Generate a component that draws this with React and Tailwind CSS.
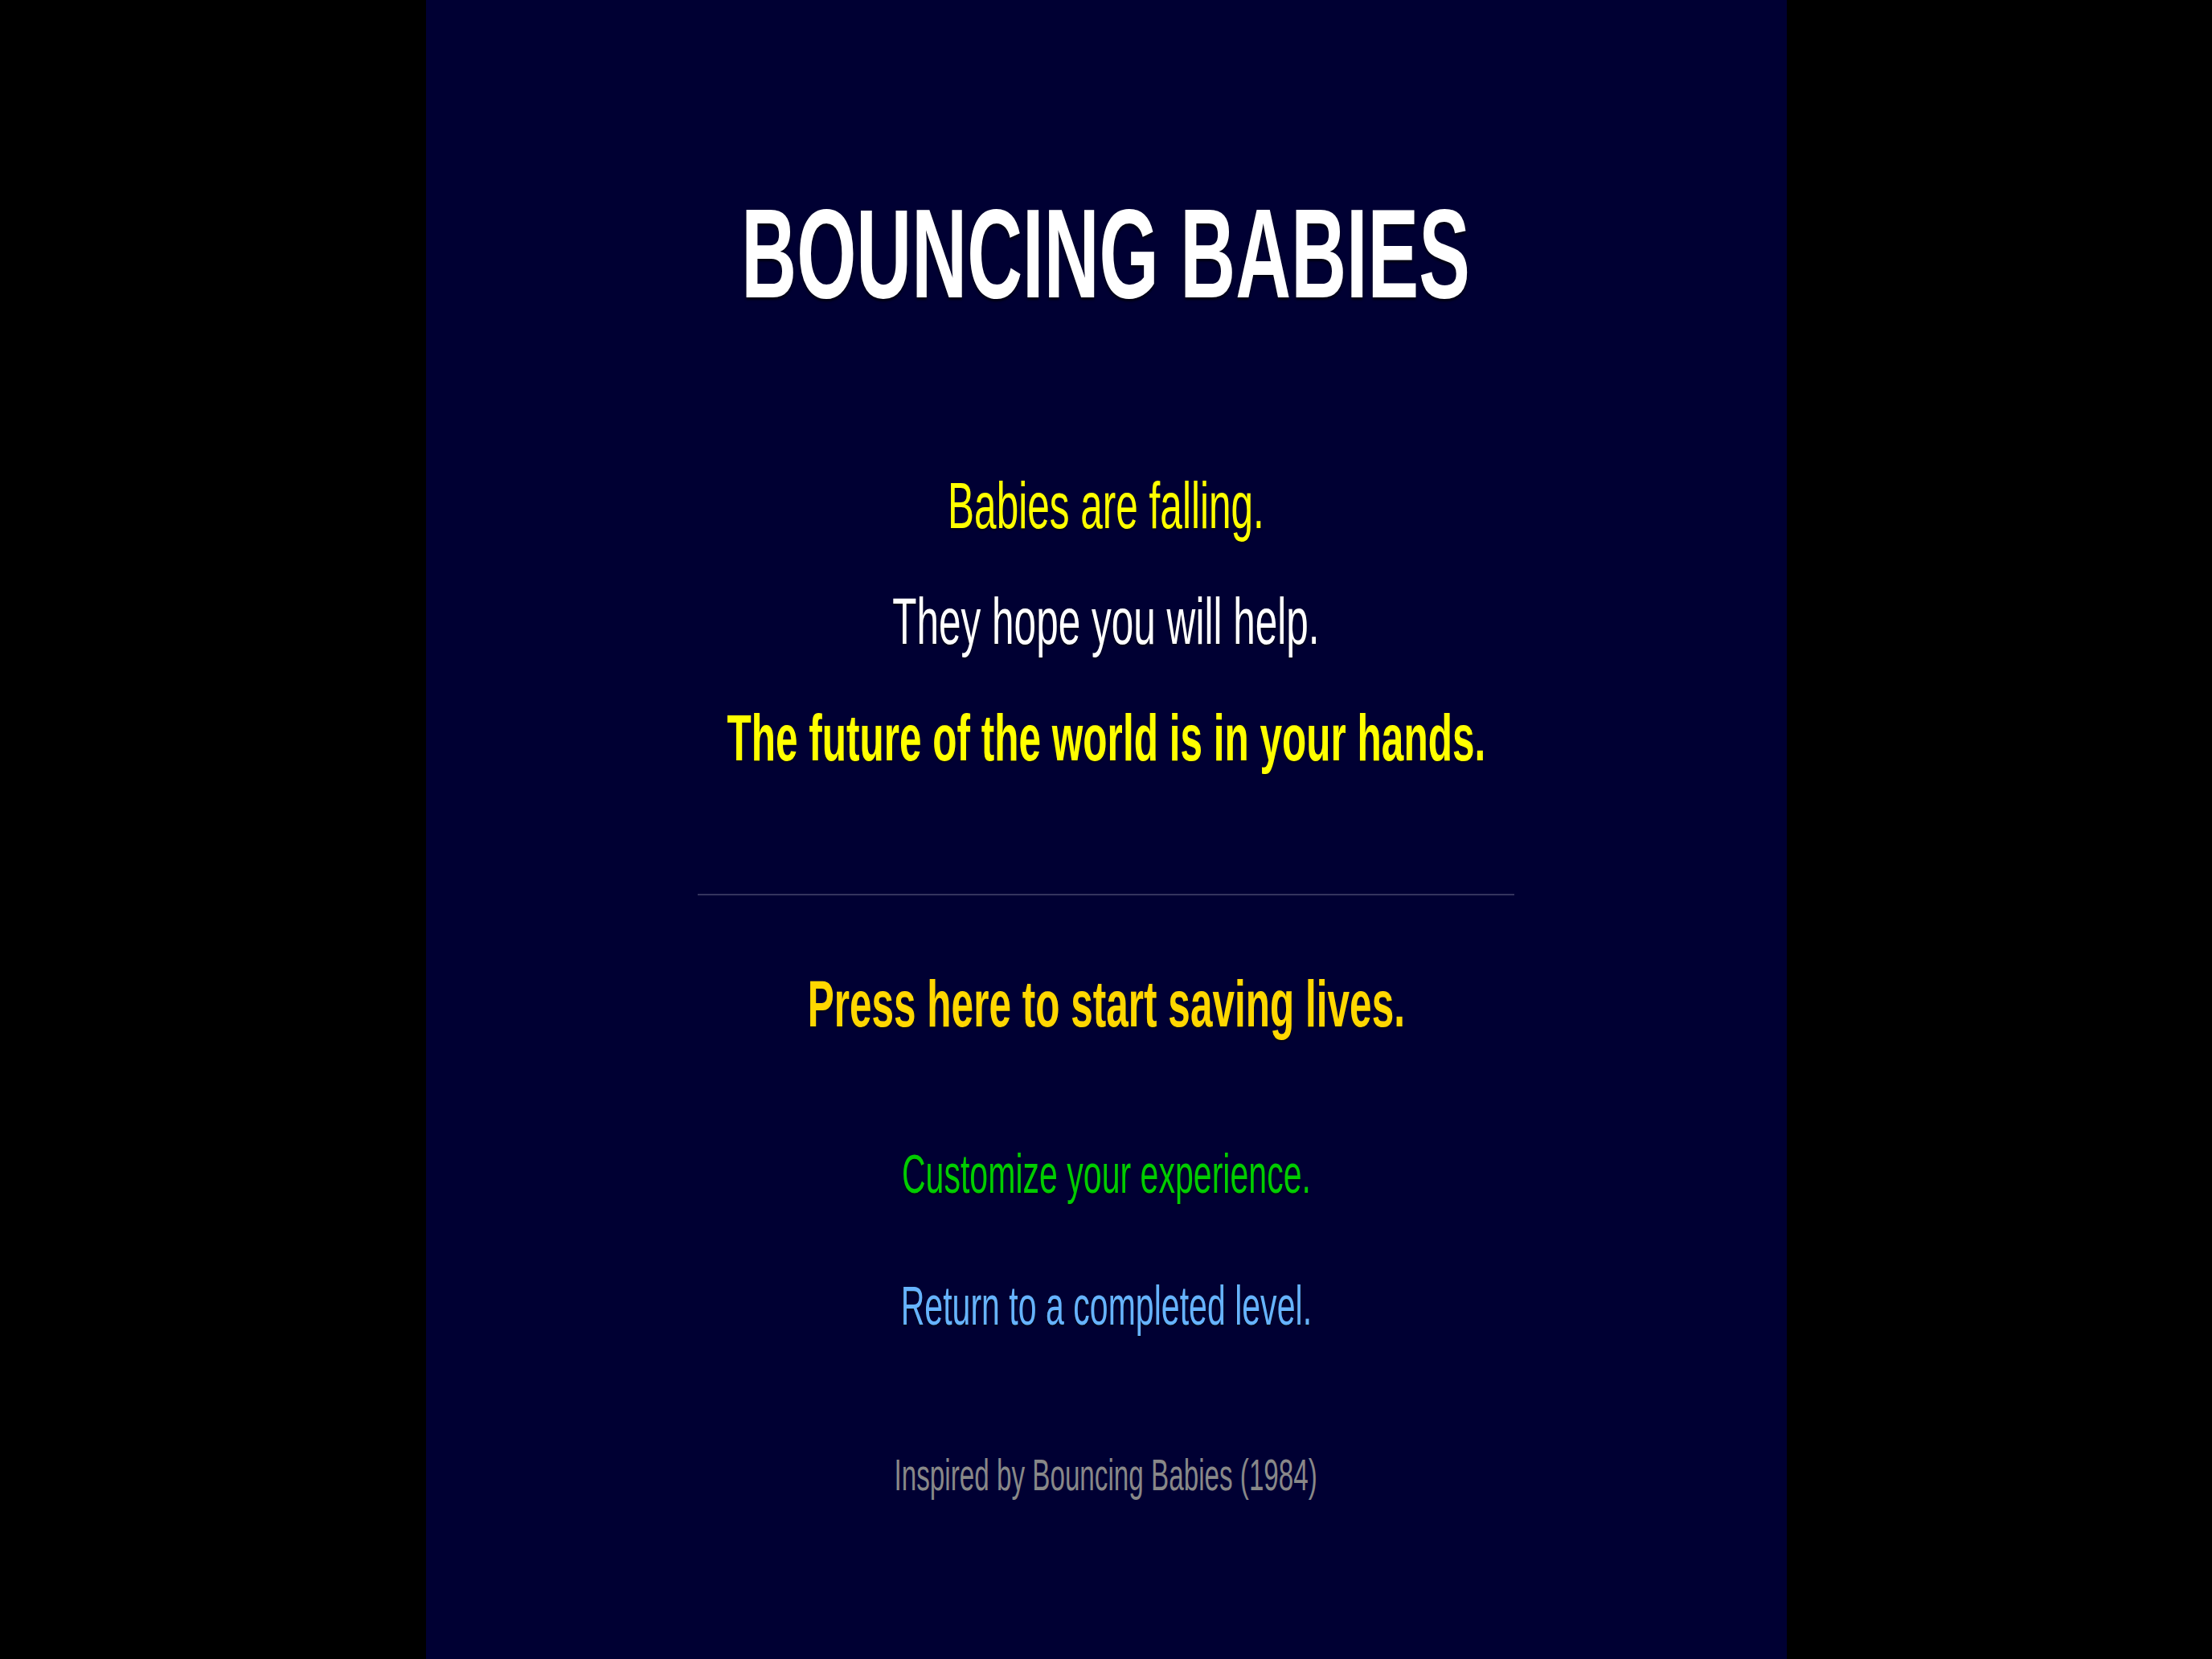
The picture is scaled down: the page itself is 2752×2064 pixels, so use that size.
import React from 'react';

const squish = 'inline-block origin-center scale-x-[0.604] whitespace-nowrap';

export default function App() {
    return (
        <div className="flex h-[2064px] w-full justify-center bg-black font-['Liberation_Sans',Arial,sans-serif]">
            <div className="flex h-full w-[1693px] flex-col items-center bg-[#000033] pt-[236px]">
                {/* Title */}
                <h1 className="text-[158px] font-bold leading-none text-white [text-shadow:0_3px_4px_rgba(0,0,0,0.7)]">
                    <span className={squish}>BOUNCING BABIES</span>
                </h1>

                {/* Intro */}
                <p className="mt-[194px] text-[82px] leading-none text-[#ffff00] [text-shadow:0_2px_3px_rgba(0,0,0,0.6)]">
                    <span className={squish}>Babies are falling.</span>
                </p>
                <p className="mt-[62px] text-[82px] leading-none text-white [text-shadow:0_2px_3px_rgba(0,0,0,0.6)]">
                    <span className={squish}>They hope you will help.</span>
                </p>
                <p className="mt-[63px] text-[82px] font-bold leading-none text-[#ffff00] [text-shadow:0_2px_3px_rgba(0,0,0,0.6)]">
                    <span className={squish}>The future of the world is in your hands.</span>
                </p>

                <div className="mt-[153px] h-[2px] w-[60%] bg-[#34345e]" />

                {/* Menu */}
                <button className="mt-[94px] cursor-pointer text-[82px] font-bold leading-none text-[#ffd700] [text-shadow:0_2px_3px_rgba(0,0,0,0.6)]">
                    <span className={squish}>Press here to start saving lives.</span>
                </button>
                <button className="mt-[136px] cursor-pointer text-[68px] leading-none text-[#00cc00] [text-shadow:0_2px_3px_rgba(0,0,0,0.6)]">
                    <span className={squish}>Customize your experience.</span>
                </button>
                <button className="mt-[96px] cursor-pointer text-[68px] leading-none text-[#66b3ff] [text-shadow:0_2px_3px_rgba(0,0,0,0.6)]">
                    <span className={squish}>Return to a completed level.</span>
                </button>

                <p className="mt-[150px] text-[55px] leading-none text-[#888888]">
                    <span className={squish}>Inspired by Bouncing Babies (1984)</span>
                </p>
            </div>
        </div>
    );
}
